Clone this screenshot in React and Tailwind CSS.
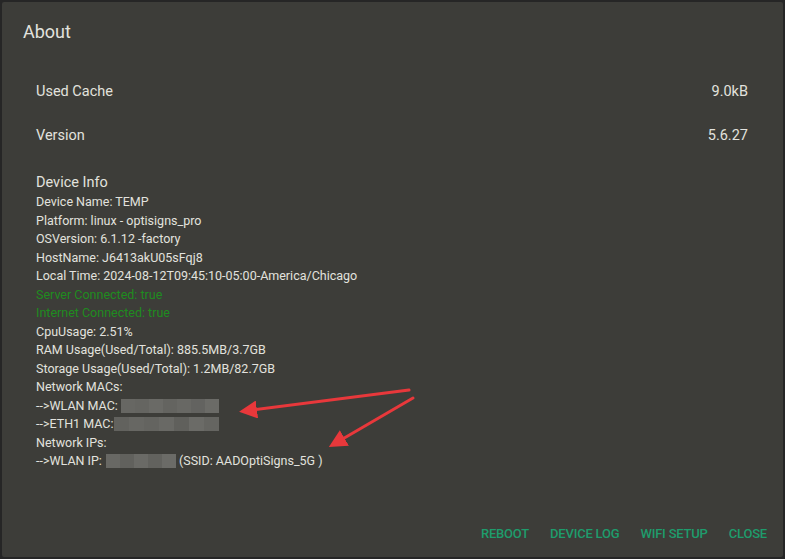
import React from 'react';

// mosaic blocks standing in for the redacted values
const Redacted = ({ cells, wide, className }) => {
  return (
    <span className={`inline-flex h-[14px] shrink-0 ${className}`}>
      {cells.map((c, i) => (
        <span
          key={i}
          className={`h-full shrink-0 ${wide ? 'w-[15px]' : 'w-[14px]'}`}
          style={{ backgroundColor: c }}
        />
      ))}
    </span>
  );
};

const wlanMac = ['#676763', '#656561', '#6a6a66', '#646460', '#686864', '#636360', '#6b6b67'];
const ethMac = ['#62625e', '#676763', '#646460', '#696965', '#60605c', '#6b6b67', '#656561'];
const wlanIp = ['#686864', '#61615d', '#6a6a66', '#62625e', '#6b6b67'];

export default function App() {
  const lines = [
    { text: 'Device Name: TEMP' },
    { text: 'Platform: linux - optisigns_pro' },
    { text: 'OSVersion: 6.1.12 -factory' },
    { text: 'HostName: J6413akU05sFqj8' },
    { text: 'Local Time: 2024-08-12T09:45:10-05:00-America/Chicago' },
    { text: 'Server Connected: true', green: true },
    { text: 'Internet Connected: true', green: true },
    { text: 'CpuUsage: 2.51%' },
    { text: 'RAM Usage(Used/Total): 885.5MB/3.7GB' },
    { text: 'Storage Usage(Used/Total): 1.2MB/82.7GB' },
    { text: 'Network MACs:' },
  ];

  return (
    <div className="w-screen h-screen bg-[#262626] p-[2px] font-['Roboto',sans-serif]">
      <div className="relative h-full w-full rounded-[2px] bg-[#3d3d39] flex flex-col text-[#e2e2de]">
        {/* Title */}
        <div className="pt-[18px] pl-[21px] h-[42px] text-[18px] leading-[24px]">About</div>

        {/* Settings rows */}
        <div className="mt-[26px] pl-[34px] pr-[35px]">
          <div className="h-[44px] flex items-center justify-between text-[14.5px]">
            <span>Used Cache</span>
            <span>9.0kB</span>
          </div>
          <div className="h-[44px] flex items-center justify-between text-[14.5px]">
            <span>Version</span>
            <span>5.6.27</span>
          </div>

          {/* Device info */}
          <div className="mt-[15px] text-[14.5px] leading-[20px]">Device Info</div>
          <div className="text-[12.5px] leading-[18.5px]">
            {lines.map((l, i) => (
              <div key={i} className={l.green ? 'text-[#1f8c1f]' : ''}>{l.text}</div>
            ))}
            <div className="flex items-center">
              <span>--&gt;WLAN MAC:</span>
              <Redacted cells={wlanMac} className="ml-[3px]" />
            </div>
            <div className="flex items-center">
              <span>--&gt;ETH1 MAC:</span>
              <Redacted cells={ethMac} wide className="ml-[1px]" />
            </div>
            <div>Network IPs:</div>
            <div className="flex items-center">
              <span>--&gt;WLAN IP:</span>
              <Redacted cells={wlanIp} className="ml-[4px]" />
              <span>&nbsp;(SSID: AADOptiSigns_5G )</span>
            </div>
          </div>
        </div>

        {/* Actions */}
        <div className="mt-auto flex justify-end gap-[5px] pr-[8px] pb-[5px]">
          {['REBOOT', 'DEVICE LOG', 'WIFI SETUP', 'CLOSE'].map((b) => (
            <button key={b} className="h-[36px] px-[8px] text-[13px] font-medium tracking-[-0.2px] text-[#1e9c6c]">
              {b}
            </button>
          ))}
        </div>

        {/* annotation arrows */}
        <svg className="absolute left-[-2px] top-[-2px] pointer-events-none" width="785" height="559" viewBox="0 0 785 559">
          <defs>
            <marker id="head" markerWidth="6" markerHeight="6" refX="4" refY="3" orient="auto" markerUnits="strokeWidth">
              <path d="M0,0 L6,3 L0,6 Z" fill="#e8383b" />
            </marker>
          </defs>
          <line x1="409" y1="390" x2="245" y2="411" stroke="#e8383b" strokeWidth="3" strokeLinecap="round" markerEnd="url(#head)" />
          <line x1="413" y1="398" x2="334" y2="444" stroke="#e8383b" strokeWidth="3" strokeLinecap="round" markerEnd="url(#head)" />
        </svg>
      </div>
    </div>
  );
}
